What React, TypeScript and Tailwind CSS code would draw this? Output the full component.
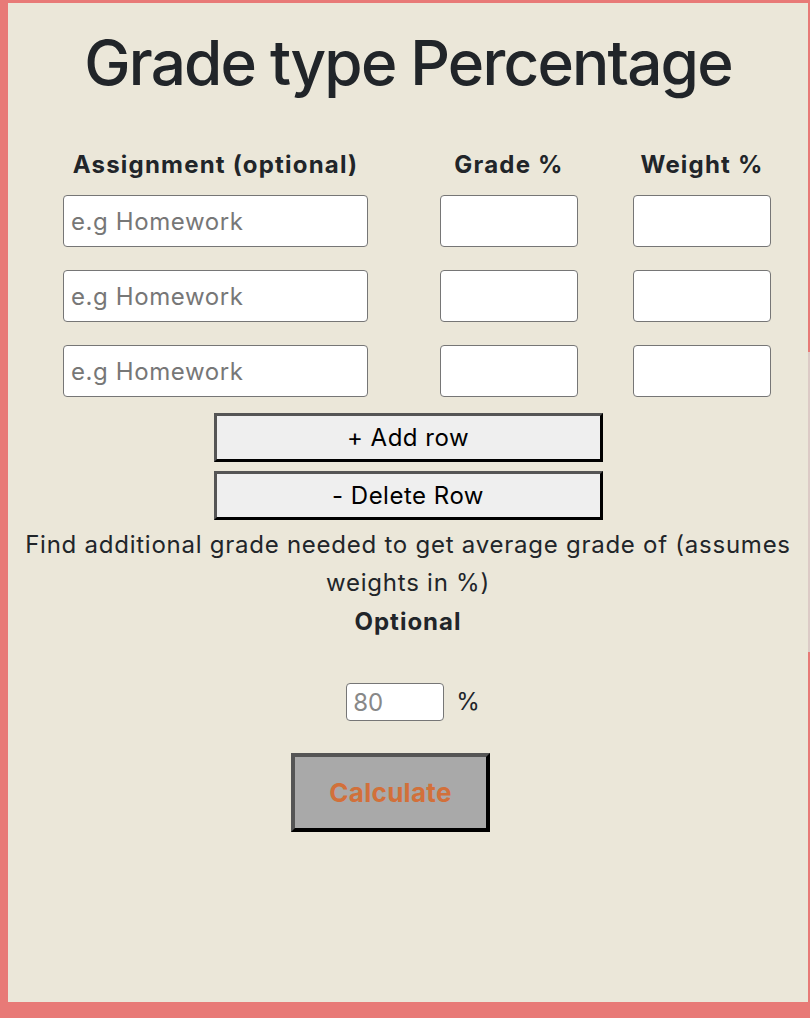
import React from 'react';

const rows = [0, 1, 2];

const inputClass =
  'h-[52px] rounded-[4px] border-[1.5px] border-[#767676] bg-white px-[7px] text-[24px] tracking-[0.6px] text-[#212529] placeholder:text-[#777] outline-none';

const greyButton =
  'h-[49px] w-[389px] border-[3px] border-t-[#555] border-l-[#555] border-r-black border-b-black bg-[#efefef] text-[24px] tracking-[0.5px] text-black';

export default function App() {
  return (
    <div className="min-h-[1018px] bg-[#e87a77] pt-[3px] pl-2" style={{ fontFamily: 'Inter, "Noto Sans", sans-serif' }}>
      <div className="relative h-[999px] w-[800px] bg-[#ebe7d9] text-[#212529]">
        <h1 className="pt-[20px] text-center text-[62px] leading-[80px] font-medium tracking-[-1.8px] text-[#212529]">Grade type Percentage</h1>

        <div className="mt-[47px] ml-[55px] flex flex-col gap-[23px]">
          <div className="-mb-[8px] flex text-[24px] font-bold leading-[30px] tracking-[1.2px]">
            <span className="w-[305px] text-center whitespace-nowrap">Assignment (optional)</span>
            <span className="ml-[72px] w-[138px] text-center whitespace-nowrap">Grade %</span>
            <span className="ml-[55px] w-[138px] text-center whitespace-nowrap">Weight %</span>
          </div>
          {rows.map((r) => (
            <div key={r} className="flex">
              <input className={`${inputClass} w-[305px]`} placeholder="e.g Homework" />
              <input className={`${inputClass} ml-[72px] w-[138px]`} />
              <input className={`${inputClass} ml-[55px] w-[138px]`} />
            </div>
          ))}
        </div>

        <div className="mt-[16px] flex flex-col items-center gap-[9px]">
          <button className={greyButton}>+ Add row</button>
          <button className={greyButton}>- Delete Row</button>
        </div>

        <p className="mt-[6px] px-[12px] text-center text-[24px] leading-[38px] tracking-[0.75px] text-[#212529]">
          Find additional grade needed to get average grade of (assumes weights in %)
        </p>
        <p className="text-center text-[24px] leading-[40px] font-bold tracking-[1px]">Optional</p>

        <div className="mt-[41px] flex items-center justify-center gap-[12px]">
          <input
            className="ml-[10px] h-[38px] w-[98px] rounded-[4px] border-[1.5px] border-[#767676] bg-white px-[6px] text-[24px] placeholder:text-[#888] outline-none"
            placeholder="80"
          />
          <span className="text-[24px]">%</span>
        </div>

        <div className="mt-[32px] flex justify-center">
          <button className="-ml-[35px] h-[79px] w-[199px] border-[4px] border-t-[#555] border-l-[#555] border-r-black border-b-black bg-[#a9a9a9] text-[26px] font-bold tracking-[0.3px] text-[#d2703a]">
            Calculate
          </button>
        </div>

        <div className="absolute top-[349px] right-[-2px] h-[300px] w-[2px] bg-[#dccac6]" />
      </div>
    </div>
  );
}
